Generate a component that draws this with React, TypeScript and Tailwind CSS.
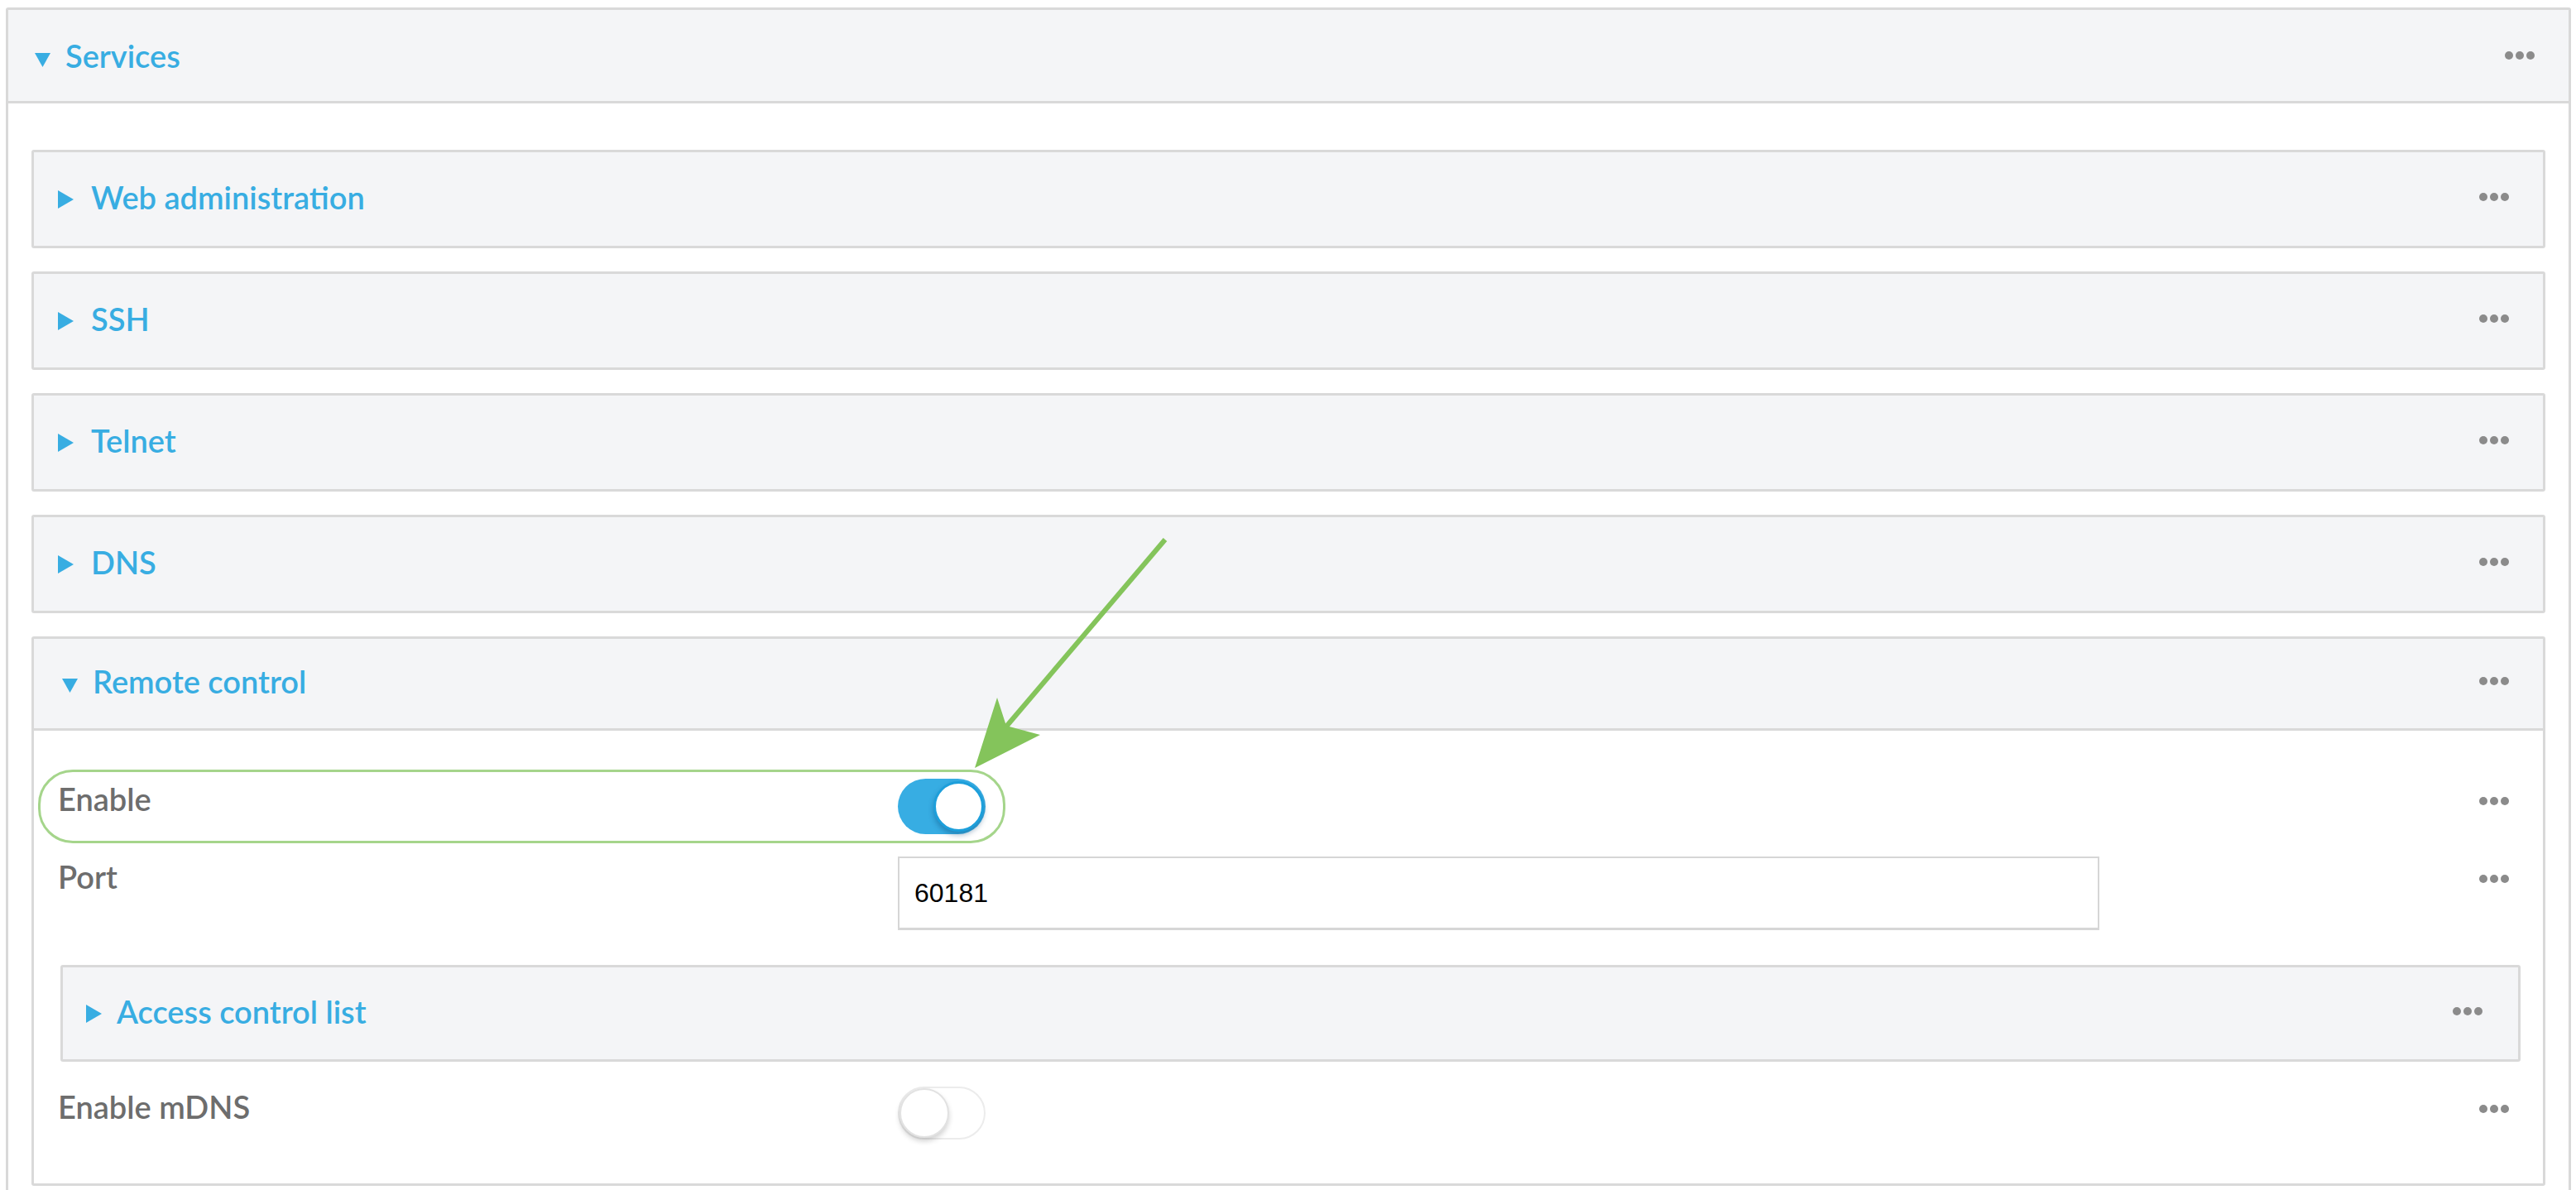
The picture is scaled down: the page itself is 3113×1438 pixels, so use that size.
import React from 'react';

const BLUE = 'text-[#38ade2]';

const Dots: React.FC = () => (
  <div className="flex gap-[3px]">
    <span className="w-[10px] h-[10px] rounded-full bg-[#8b8b8b]" />
    <span className="w-[10px] h-[10px] rounded-full bg-[#8b8b8b]" />
    <span className="w-[10px] h-[10px] rounded-full bg-[#8b8b8b]" />
  </div>
);

const CaretDown: React.FC = () => (
  <svg width="19" height="17" viewBox="0 0 19 17" className="mb-[8px] shrink-0">
    <path d="M0 0H19L9.5 17Z" fill="#38ade2" />
  </svg>
);

const CaretRight: React.FC = () => (
  <svg width="19" height="22" viewBox="0 0 19 22" className="mb-[8px] shrink-0">
    <path d="M0 0L19 11L0 22Z" fill="#38ade2" />
  </svg>
);

const Title: React.FC<{ open?: boolean; label: string; gap: string }> = ({ open, label, gap }) => (
  <div className={`flex items-end ${gap}`}>
    {open ? <CaretDown /> : <CaretRight />}
    <span className={`text-[38px] leading-[44px] font-semibold ${BLUE}`}>{label}</span>
  </div>
);

const CollapsedPanel: React.FC<{ label: string }> = ({ label }) => (
  <div className="h-[119px] border-[3px] border-[#d9d9d9] rounded-[3px] bg-[#f4f5f7] flex items-center justify-between pl-[29px] pr-[41px] pb-[6px]">
    <Title label={label} gap="gap-[21px]" />
    <Dots />
  </div>
);

const ToggleOn: React.FC = () => (
  <div className="w-[106px] h-[67px] rounded-full bg-[#37ade3] flex items-center justify-end pr-[2px]">
    <div className="w-[61px] h-[61px] rounded-full bg-white border-[3px] border-[#1d9fdb] shadow-[0_4px_6px_rgba(0,60,110,0.35)]" />
  </div>
);

const ToggleOff: React.FC = () => (
  <div className="w-[106px] h-[64px] rounded-full bg-white border-2 border-[#ececec] flex items-center">
    <div className="w-[60px] h-[60px] rounded-full bg-white border-2 border-[#e2e2e2] shadow-[0_4px_6px_rgba(0,0,0,0.18)]" />
  </div>
);

const Row: React.FC<{ label: string; className?: string; children: React.ReactNode }> = ({ label, className, children }) => (
  <div className={`flex items-start ${className ?? ''}`}>
    <div className="w-[1015px] mt-[2px] text-[38px] leading-[44px] font-semibold text-[#6d6d6d]">{label}</div>
    <div className="flex-1">{children}</div>
    <div className="mt-[22px] mr-[12px]">
      <Dots />
    </div>
  </div>
);

export default function App() {
  return (
    <div className="relative w-[3113px] h-[1438px] overflow-hidden bg-white pl-[7px] pt-[9px] font-['Lato','Open_Sans',sans-serif]">
      <div className="w-[3100px] border-[3px] border-[#d9d9d9] rounded-[3px]">
        <div className="h-[113px] bg-[#f4f5f7] border-b-[3px] border-[#d9d9d9] flex items-center justify-between pl-[32px] pr-[41px]">
          <Title open label="Services" gap="gap-[18px]" />
          <Dots />
        </div>

        <div className="pt-[56px] pl-[28px] pr-[28px] pb-[40px] flex flex-col gap-[28px]">
          <CollapsedPanel label="Web administration" />
          <CollapsedPanel label="SSH" />
          <CollapsedPanel label="Telnet" />
          <CollapsedPanel label="DNS" />

          <div className="border-[3px] border-[#d9d9d9] rounded-[3px] bg-white">
            <div className="h-[111px] bg-[#f4f5f7] border-b-[3px] border-[#d9d9d9] flex items-center justify-between pl-[34px] pr-[41px] pb-[6px]">
              <Title open label="Remote control" gap="gap-[18px]" />
              <Dots />
            </div>

            <div className="pt-[58px] pb-[53px] px-[29px] flex flex-col">
              <Row label="Enable">
                <ToggleOn />
              </Row>

              <Row label="Port" className="mt-[27px]">
                <div className="w-[1452px] h-[89px] border-2 border-b-[3px] border-[#d6d6d6] flex items-center pl-[18px] font-['Liberation_Sans',Arial,sans-serif] text-[32px] text-black">
                  60181
                </div>
              </Row>

              <div className="mt-[42px] ml-[3px] -mr-[2px] h-[117px] border-[3px] border-[#d9d9d9] rounded-[3px] bg-[#f4f5f7] flex items-center justify-between pl-[28px] pr-[43px] pb-[6px]">
                <Title label="Access control list" gap="gap-[18px]" />
                <Dots />
              </div>

              <Row label="Enable mDNS" className="mt-[30px]">
                <ToggleOff />
              </Row>
            </div>
          </div>
        </div>
      </div>

      {/* annotation: highlight box + arrow */}
      <div className="absolute left-[46px] top-[930px] w-[1169px] h-[89px] rounded-[42px] border-[3px] border-[#a5d58b] pointer-events-none" />
      <svg className="absolute left-0 top-0 pointer-events-none" width="3113" height="1438" viewBox="0 0 3113 1438">
        <line x1="1408" y1="652" x2="1210" y2="885" stroke="#84c45b" strokeWidth="6" />
        <polygon points="1205,843 1216,877 1257,888 1178,928" fill="#84c45b" />
      </svg>
    </div>
  );
}
